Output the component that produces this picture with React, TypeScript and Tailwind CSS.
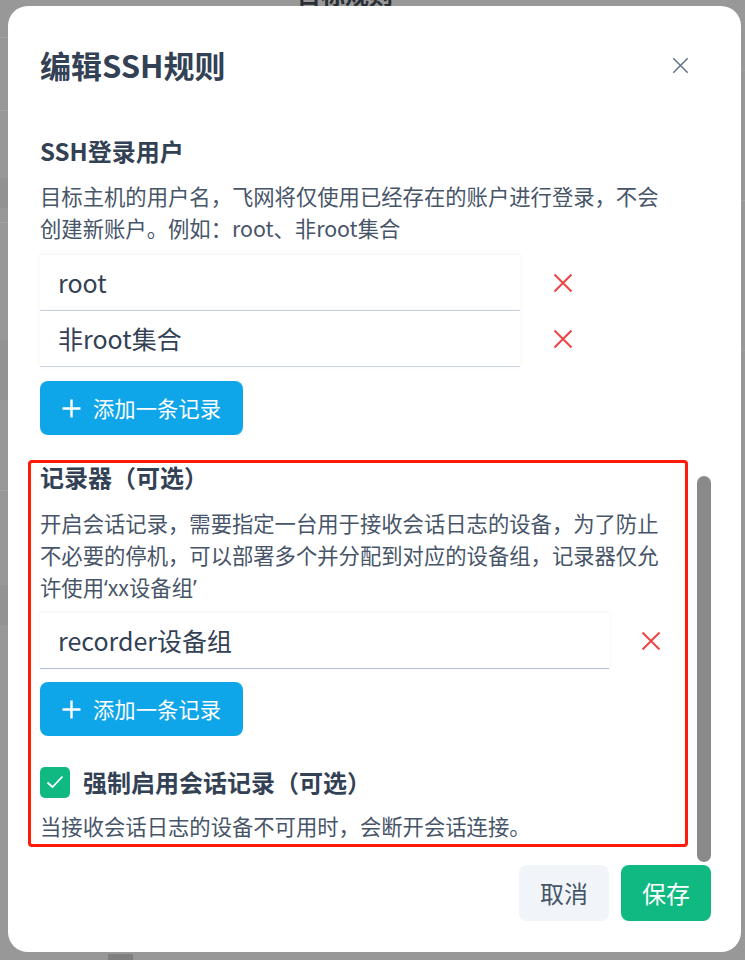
import React from "react";

function XIcon({ size = 20, color = "#ef4444", stroke = 2 }: { size?: number; color?: string; stroke?: number }) {
  return (
    <svg width={size} height={size} viewBox="0 0 20 20" fill="none">
      <path d="M1.5 1.5 L18.5 18.5 M18.5 1.5 L1.5 18.5" stroke={color} strokeWidth={stroke} strokeLinecap="butt" />
    </svg>
  );
}

function PlusIcon() {
  return (
    <svg width="19" height="19" viewBox="0 0 19 19" fill="none">
      <path d="M9.5 0.5 V18.5 M0.5 9.5 H18.5" stroke="white" strokeWidth="2.4" />
    </svg>
  );
}

function AddButton() {
  return (
    <button className="flex h-[54px] w-[203px] items-center gap-[12px] rounded-[8px] bg-[#0ea5e9] pl-[22px] text-[21.33px] leading-[32px] text-white">
      <PlusIcon />
      <span>添加一条记录</span>
    </button>
  );
}

function InputRow({ value, width, gap, borderColor }: { value: string; width: string; gap: string; borderColor: string }) {
  return (
    <div className="flex items-center">
      <div className={`${width} flex h-[56px] items-center border-b ${borderColor} bg-white pl-[18px] text-[25px] text-[#334155] shadow-[0_-1px_5px_rgba(15,23,42,0.05)]`}>
        {value}
      </div>
      <div className={gap}>
        <XIcon />
      </div>
    </div>
  );
}

export default function App() {
  return (
    <div className="relative h-[960px] w-[745px] overflow-hidden bg-[#989898] [font-family:'Noto_Sans','Noto_Sans_CJK_SC',sans-serif]">
      {/* underlying page, dimmed */}
      <div className="absolute left-[297px] top-[-19px] text-[24px] font-bold leading-[26px] text-[#2a2f36] [font-family:'Noto_Sans_CJK_SC',sans-serif]">目标规则</div>
      <div className="absolute left-0 top-[37px] h-px w-[10px] bg-[#a3a3a3]" />
      <div className="absolute left-0 top-[110px] h-px w-[10px] bg-[#a3a3a3]" />
      <div className="absolute left-0 top-[178px] h-[30px] w-[10px] bg-[#929292]" />
      <div className="absolute left-0 top-[222px] h-px w-[10px] bg-[#a3a3a3]" />
      <div className="absolute left-0 top-[340px] h-[60px] w-[10px] bg-[#939393]" />
      <div className="absolute left-0 top-[490px] h-px w-[10px] bg-[#a3a3a3]" />
      <div className="absolute left-0 top-[585px] h-[40px] w-[10px] bg-[#939393]" />
      <div className="absolute right-0 top-[70px] h-px w-[6px] bg-[#a3a3a3]" />
      <div className="absolute right-0 top-[200px] h-px w-[6px] bg-[#a3a3a3]" />
      <div className="absolute right-[-6px] top-[252px] text-[20px] leading-[24px] text-[#333]">›</div>
      <div className="absolute right-0 top-[350px] h-px w-[6px] bg-[#a3a3a3]" />
      <div className="absolute left-[108px] top-[954px] h-[6px] w-[25px] bg-[#7f7f7f]" />

      {/* dialog */}
      <div className="absolute left-[8px] top-[6px] flex h-[946px] w-[733px] flex-col rounded-[20px] bg-white [font-family:'Noto_Sans_CJK_SC',sans-serif]">
        {/* header */}
        <div className="flex items-center justify-between pl-[32px] pr-[52px] pt-[39px]">
          <h2 className="text-[31px] font-bold leading-[40px] text-[#334155]">编辑SSH规则</h2>
          <XIcon size={17} color="#64748b" stroke={1.8} />
        </div>

        {/* body */}
        <div className="mt-[50px] flex flex-col pl-[32px]">
          <h3 className="text-[24px] font-bold leading-[32px] text-[#334155]">SSH登录用户</h3>
          <p className="mt-[13px] w-[630px] text-[21.33px] leading-[32px] text-[#475569]">
            目标主机的用户名，飞网将仅使用已经存在的账户进行登录，不会创建新账户。例如：root、非root集合
          </p>
          <div className="mt-[11px] flex flex-col">
            <InputRow value="root" width="w-[480px]" gap="ml-[33px]" borderColor="border-[#cbd5e1]" />
            <InputRow value="非root集合" width="w-[480px]" gap="ml-[33px]" borderColor="border-[#cbd5e1]" />
          </div>
          <div className="mt-[14px]">
            <AddButton />
          </div>

          {/* highlighted section */}
          <div className="ml-[-12px] mt-[25px] w-[660px] rounded-[4px] border-[3px] border-[#ff1a0a] pb-[2px] pl-[9px]">
            <h3 className="mt-[-2px] text-[24px] font-bold leading-[32px] text-[#334155]">记录器（可选）</h3>
            <p className="mt-[14px] w-[630px] text-[21.33px] leading-[32px] text-[#475569]">
              开启会话记录，需要指定一台用于接收会话日志的设备，为了防止不必要的停机，可以部署多个并分配到对应的设备组，记录器仅允许使用
              <span className="[font-family:'Noto_Sans',sans-serif]">‘</span>xx设备组<span className="[font-family:'Noto_Sans',sans-serif]">’</span>
            </p>
            <div className="mt-[9px]">
              <InputRow value="recorder设备组" width="w-[569px]" gap="ml-[32px]" borderColor="border-[#aebfd6]" />
            </div>
            <div className="mt-[13px]">
              <AddButton />
            </div>
            <div className="mt-[30px] flex items-center gap-[13px]">
              <div className="flex h-[31px] w-[30px] items-center justify-center rounded-[5px] bg-[#10b981]">
                <svg width="18" height="14" viewBox="0 0 18 14" fill="none">
                  <path d="M1.5 7.5 L6.5 12 L16.5 1.5" stroke="white" strokeWidth="1.8" />
                </svg>
              </div>
              <span className="text-[24px] font-bold leading-[32px] text-[#334155]">强制启用会话记录（可选）</span>
            </div>
            <p className="mt-[12px] text-[21.33px] leading-[32px] text-[#475569]">当接收会话日志的设备不可用时，会断开会话连接。</p>
          </div>
        </div>

        {/* footer */}
        <div className="mt-[18px] flex justify-end gap-[12px] pr-[30px]">
          <button className="h-[56px] w-[90px] rounded-[8px] bg-[#f1f5f9] text-[24px] text-[#475569]">取消</button>
          <button className="h-[56px] w-[90px] rounded-[8px] bg-[#10b981] text-[24px] text-white">保存</button>
        </div>

        {/* scrollbar thumb */}
        <div className="absolute left-[689px] top-[470px] h-[386px] w-[14px] rounded-full bg-[#8a8a8a]" />
      </div>
    </div>
  );
}
